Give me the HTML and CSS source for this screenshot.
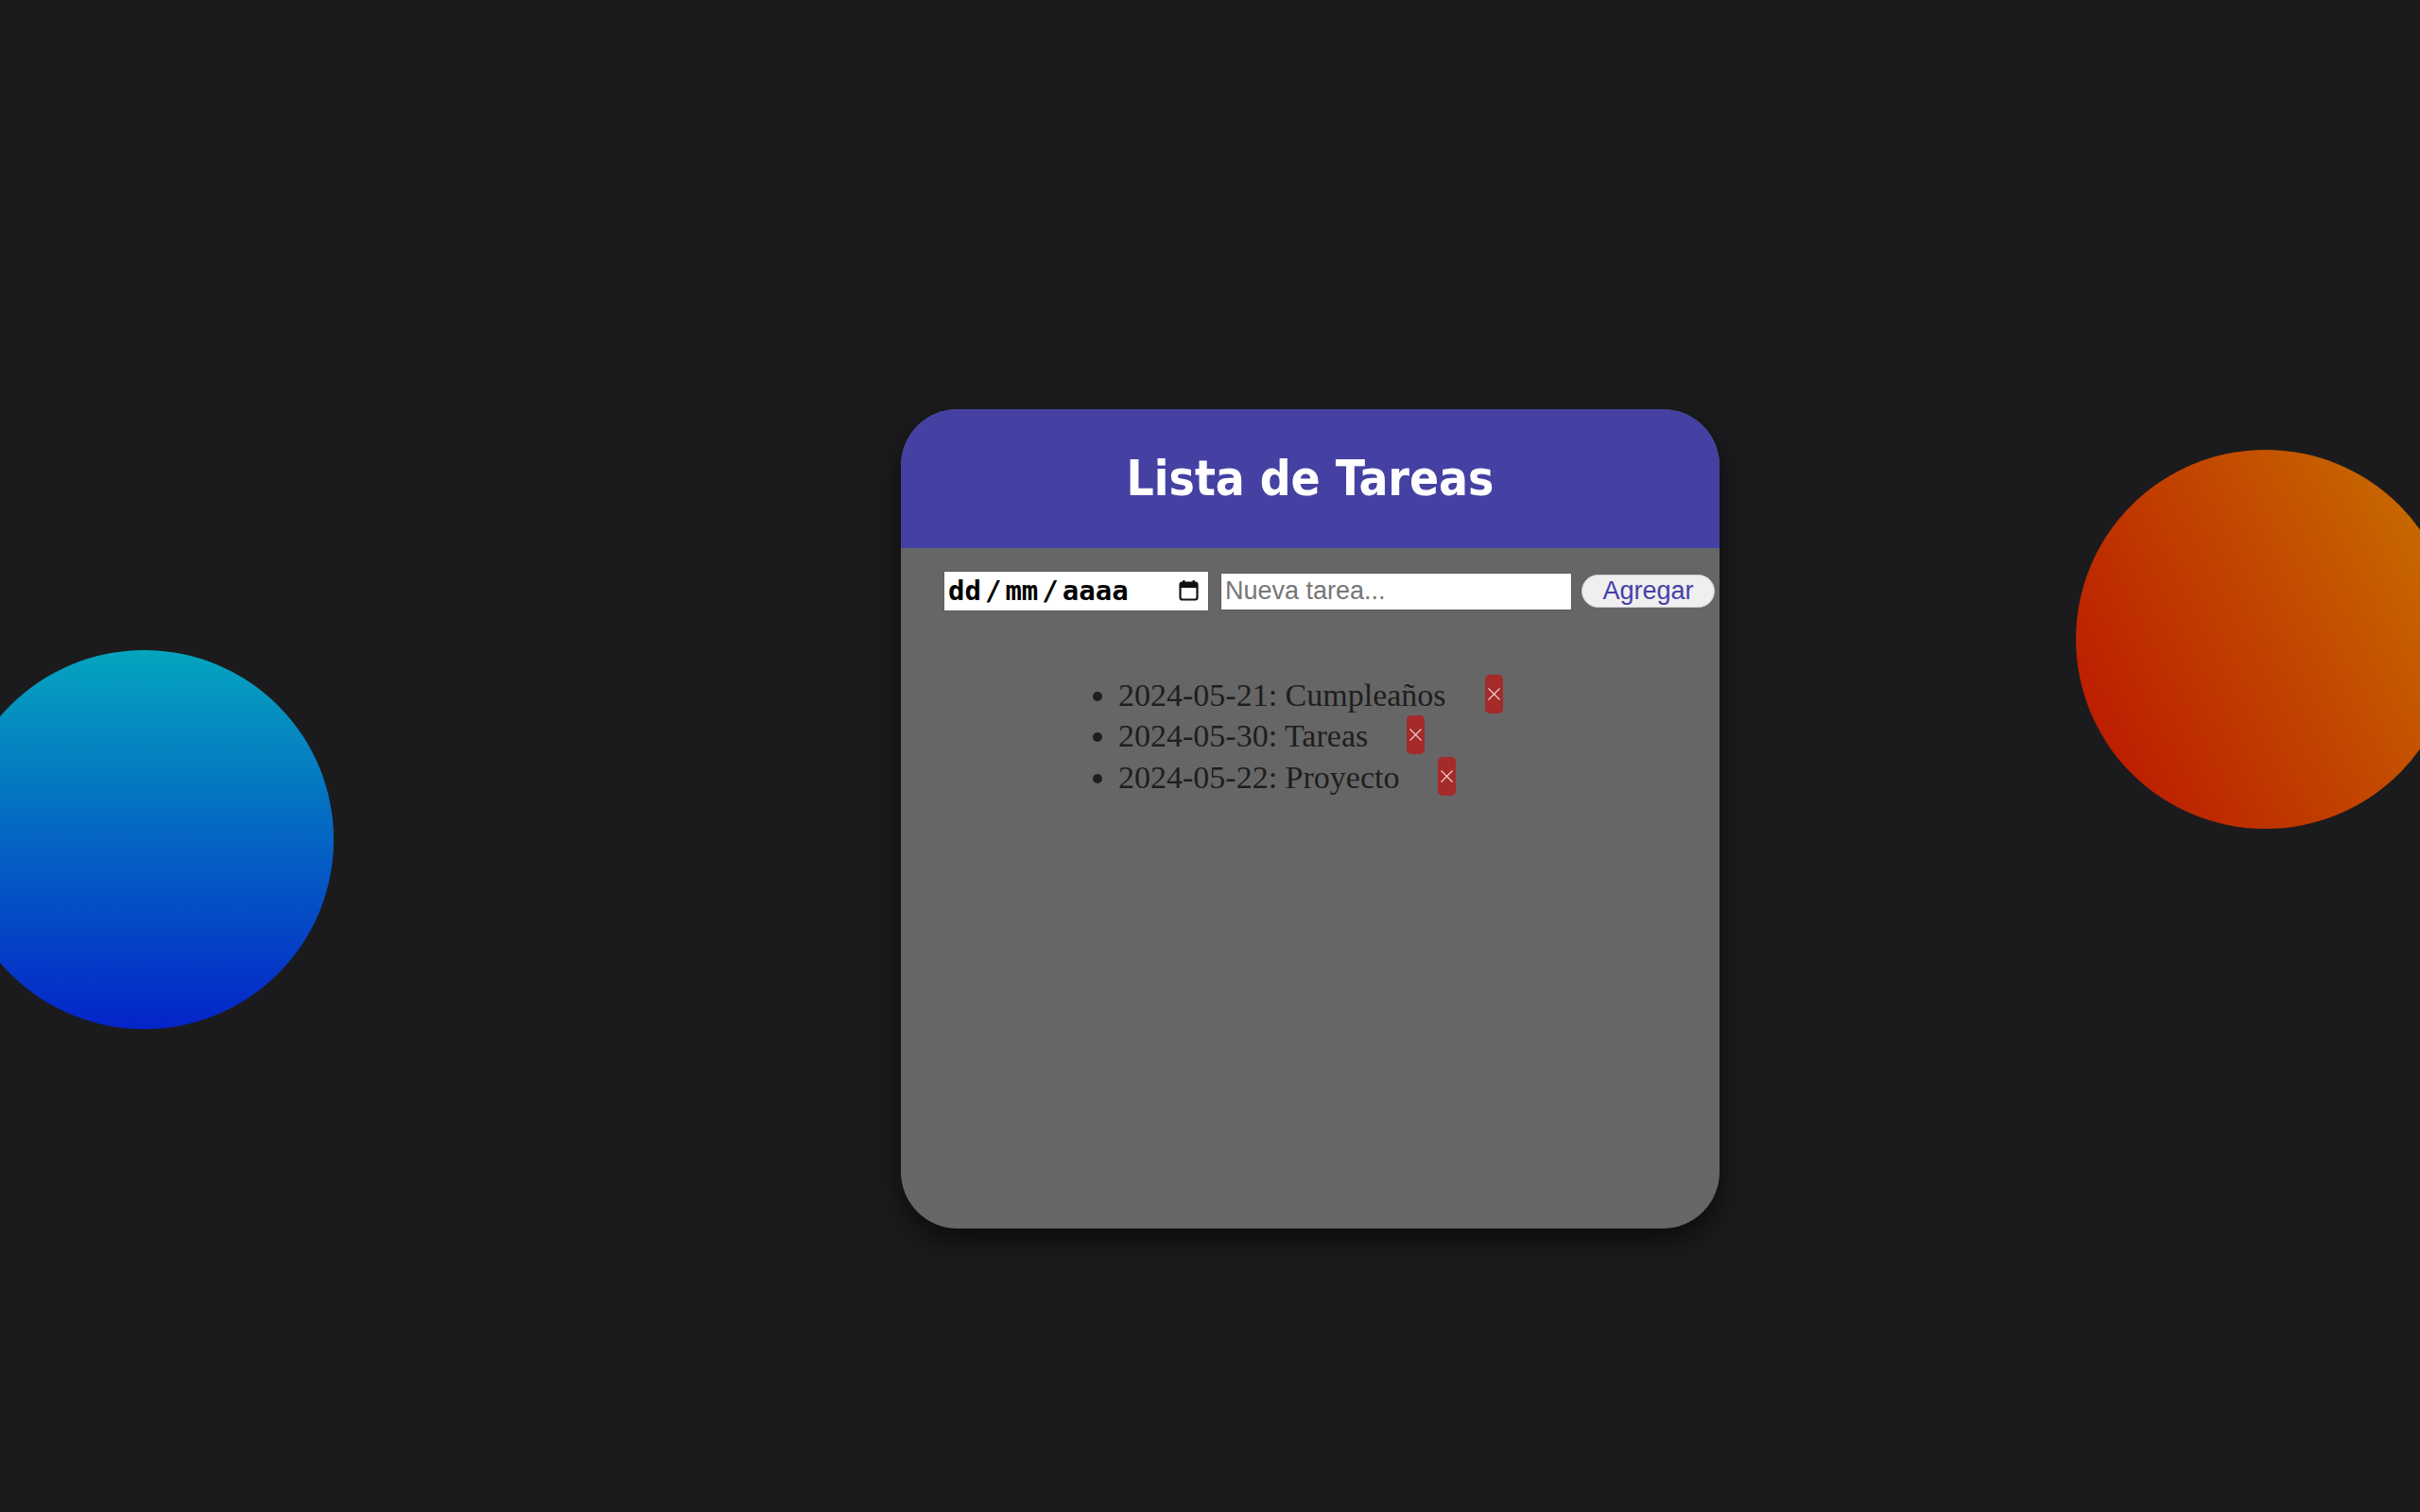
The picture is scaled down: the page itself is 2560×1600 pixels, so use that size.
FILE: index.html
```html
<!DOCTYPE html>
<html lang="es">
<head>
<meta charset="utf-8">
<title>Lista de Tareas</title>
<link rel="stylesheet" href="styles.css">
</head>
<body>
<div class="blob blob-blue"></div>
<div class="blob blob-orange"></div>
<main class="page">
  <section class="card">
    <header class="card-header">
      <h1 class="title">Lista de Tareas</h1>
    </header>
    <div class="card-body">
      <form class="task-form">
        <label class="date-field">
          <span class="date-text">dd<span class="sep">/</span>mm<span class="sep">/</span>aaaa</span>
          <svg class="cal-icon" viewBox="0 0 21 22" width="21" height="22" aria-hidden="true">
            <rect x="4" y="0" width="2.6" height="4" rx="1" fill="#111"/>
            <rect x="14.4" y="0" width="2.6" height="4" rx="1" fill="#111"/>
            <rect x="1.5" y="2.5" width="18" height="18" rx="2.2" fill="none" stroke="#111" stroke-width="2.2"/>
            <rect x="1.5" y="2.5" width="18" height="5.5" fill="#111"/>
          </svg>
        </label>
        <input class="text-input" type="text" placeholder="Nueva tarea...">
        <button class="add-btn" type="button">Agregar</button>
      </form>
      <ul class="task-list">
        <li class="task">2024-05-21: Cumpleaños<button class="del-btn" type="button" aria-label="Eliminar"><svg viewBox="0 0 13 13" width="13" height="13"><path d="M0.5 0.5 L12.5 12.5 M12.5 0.5 L0.5 12.5" stroke="currentColor" stroke-width="1.1" fill="none"/></svg></button></li>
        <li class="task">2024-05-30: Tareas<button class="del-btn" type="button" aria-label="Eliminar"><svg viewBox="0 0 13 13" width="13" height="13"><path d="M0.5 0.5 L12.5 12.5 M12.5 0.5 L0.5 12.5" stroke="currentColor" stroke-width="1.1" fill="none"/></svg></button></li>
        <li class="task">2024-05-22: Proyecto<button class="del-btn" type="button" aria-label="Eliminar"><svg viewBox="0 0 13 13" width="13" height="13"><path d="M0.5 0.5 L12.5 12.5 M12.5 0.5 L0.5 12.5" stroke="currentColor" stroke-width="1.1" fill="none"/></svg></button></li>
      </ul>
    </div>
  </section>
</main>
</body>
</html>
```

FILE: styles.css
```css
* { box-sizing: border-box; }

html, body {
  margin: 0;
  padding: 0;
}

body {
  background: #1b1b1d;
  width: 2560px;
  height: 1600px;
  overflow: hidden;
  position: relative;
  font-family: "Liberation Serif", serif;
}

.blob {
  position: absolute;
  width: 401px;
  height: 401px;
  border-radius: 50%;
}

.blob-blue {
  left: -48px;
  top: 688px;
  background: linear-gradient(to bottom, #05a5be, #0424c9);
}

.blob-orange {
  left: 2196px;
  top: 476px;
  background: linear-gradient(62deg, #ba1200, #c97400);
}

.page {
  position: relative;
  height: 1600px;
  display: flex;
  justify-content: center;
  align-items: center;
  padding-left: 212px;
  padding-top: 133px;
}

.card {
  width: 866px;
  height: 867px;
  background: #666666;
  border-radius: 60px;
  overflow: hidden;
  box-shadow: 0 14px 30px rgba(0, 0, 0, 0.55);
  display: flex;
  flex-direction: column;
}

.card-header {
  height: 147px;
  background: #4441a3;
  display: flex;
  align-items: center;
  justify-content: center;
  flex: none;
}

.title {
  margin: 0;
  color: #ffffff;
  font-family: "DejaVu Sans", sans-serif;
  font-stretch: condensed;
  font-weight: bold;
  font-size: 51px;
  line-height: 1;
}

.card-body {
  padding: 24px 0 0 45px;
}

.task-form {
  display: flex;
  align-items: center;
  margin: 0;
}

.date-field {
  width: 281px;
  height: 43px;
  border: 1px solid #5a5a5a;
  background: #ffffff;
  padding: 0 10px 0 4px;
  display: flex;
  align-items: center;
  justify-content: space-between;
}

.date-text {
  font-family: "DejaVu Sans Mono", monospace;
  font-weight: bold;
  font-size: 29px;
  color: #000;
  line-height: 1;
}

.sep {
  margin: 0 4px;
}

.cal-icon {
  display: block;
  margin-top: -2px;
}

.text-input {
  width: 372px;
  height: 40px;
  margin: 0 0 0 12px;
  border: 1px solid #5a5a5a;
  background: #ffffff;
  padding: 0 4px;
  font-family: "Liberation Sans", Arial, sans-serif;
  font-size: 27px;
  color: #000;
}

.text-input::placeholder {
  color: #767676;
}

.add-btn {
  margin-left: 10px;
  width: 141px;
  height: 35px;
  padding: 0;
  border: 1px solid #cfcfcf;
  border-radius: 18px;
  background: #efefef;
  color: #4441a9;
  font-family: "Liberation Sans", Arial, sans-serif;
  font-size: 27px;
  line-height: 1;
}

.task-list {
  margin: 67px 0 0 145px;
  padding-left: 40px;
  font-size: 34px;
  color: #1e1e1e;
}

.task {
  height: 43.3px;
  line-height: 43.3px;
}

.del-btn {
  display: inline-block;
  vertical-align: top;
  margin-left: 41px;
  width: 19px;
  height: 41px;
  padding: 0;
  border: none;
  border-radius: 5px;
  background: #a52a2a;
  color: #f3d2d2;
  line-height: 0;
}

.del-btn svg {
  display: block;
  margin: 0 auto;
}
```
